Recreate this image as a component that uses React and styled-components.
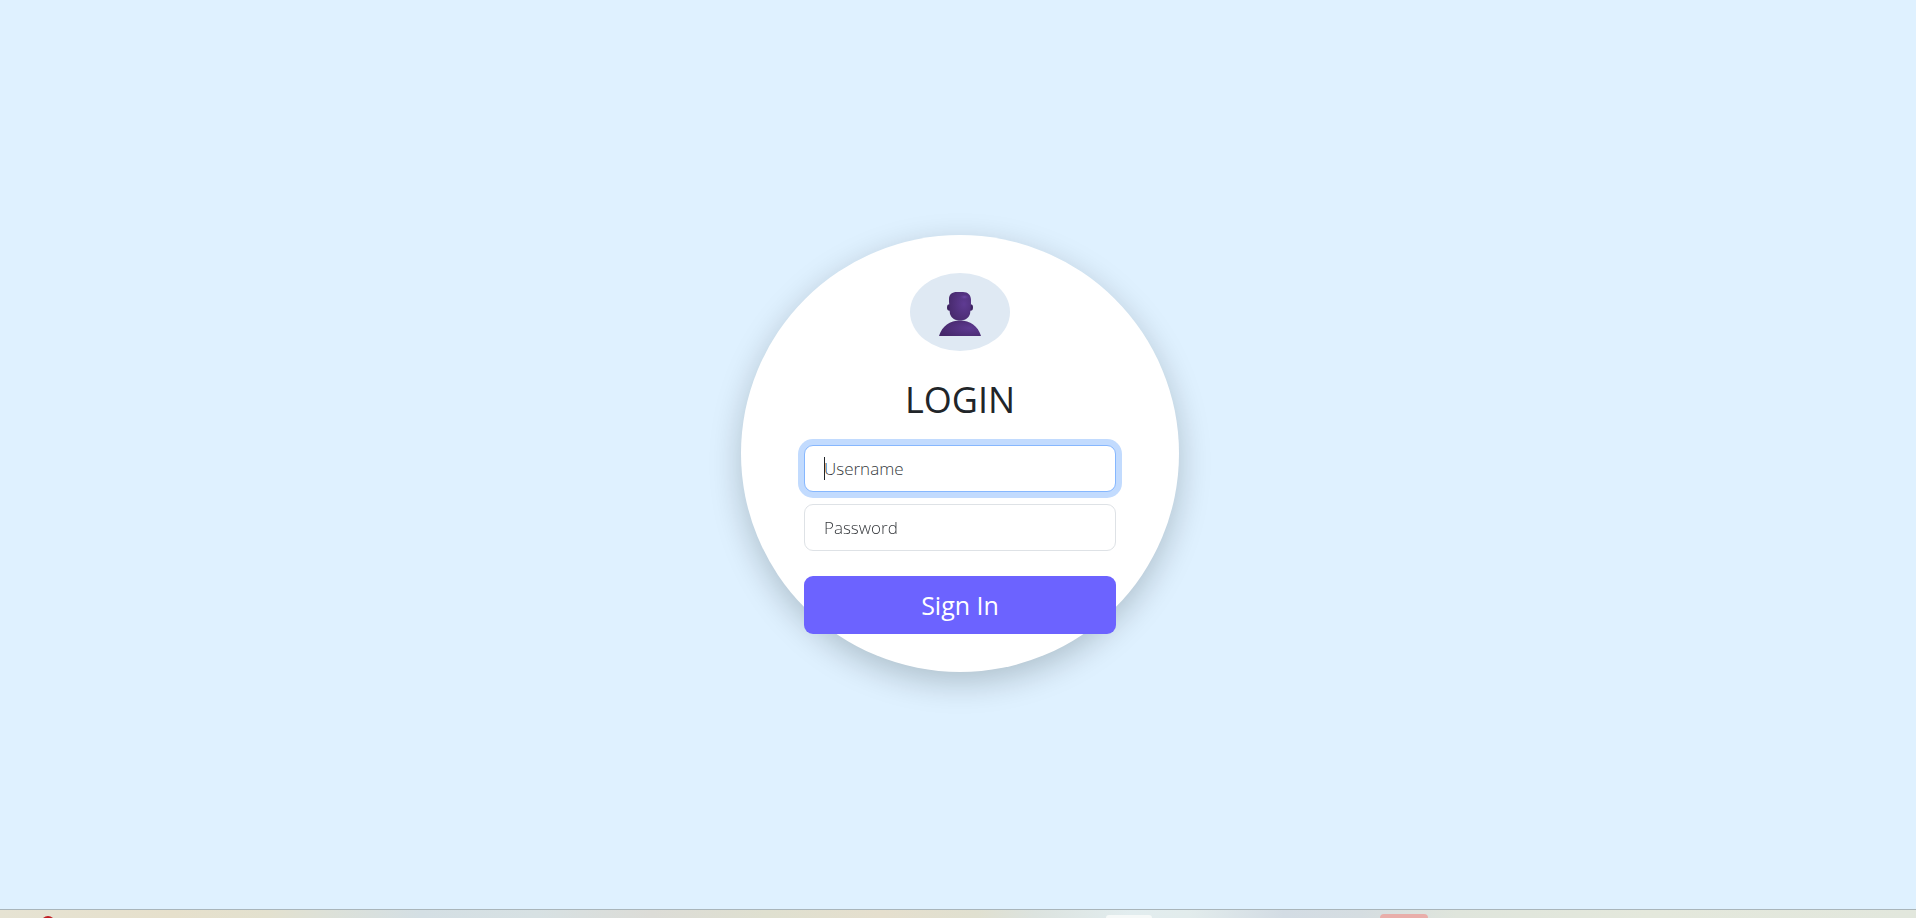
import React from "react";
import styled, { createGlobalStyle } from "styled-components";

const GlobalStyle = createGlobalStyle`
  *, *::before, *::after { box-sizing: border-box; }
  body {
    margin: 0;
    background: #dff1ff;
    color: #212529;
    font-family: "Segoe UI", "Open Sans", "Noto Sans", sans-serif;
  }
`;

const Page = styled.div`
  display: flex;
  flex-direction: column;
  min-height: 100vh;
`;

const Main = styled.main`
  flex: 1;
  display: flex;
  align-items: center;
  justify-content: center;
  padding: 0 0 2px 4px;
`;

const LoginForm = styled.form`
  display: flex;
  flex-direction: column;
  align-items: center;
  width: 438px;
  padding: 38px 63px;
  border-radius: 50%;
  background: #fff;
  box-shadow: 0 10px 32px rgba(0, 20, 20, 0.22);
`;

const Avatar = styled.svg`
  display: block;
  width: 100px;
  height: 78px;
`;

const Title = styled.h1`
  margin: 24px 0 20px;
  font-size: 36px;
  font-weight: 400;
  line-height: 50px;
`;

const Field = styled.div`
  position: relative;
  width: 100%;
  margin-bottom: ${(p) => (p.$last ? 25 : 12)}px;
`;

const Input = styled.input`
  display: block;
  width: 100%;
  height: 47px;
  padding: 0 19px;
  border: 1px solid #dee2e6;
  border-radius: 9px;
  background: #fff;
  color: #212529;
  font: 300 17px/24px "Segoe UI", "Open Sans", "Noto Sans", sans-serif;

  &::placeholder { color: #36393d; opacity: 1; }

  &:focus {
    outline: 0;
    border-color: #86b7fe;
    box-shadow: 0 0 0 6px #c2dbfe;
  }
`;

const Caret = styled.span`
  position: absolute;
  left: 20px;
  top: 12px;
  width: 1px;
  height: 23px;
  background: #212529;
`;

const SubmitButton = styled.button`
  width: 100%;
  height: 58px;
  border: 0;
  border-radius: 9px;
  background: #6c63ff;
  color: #fff;
  font: 400 25px/36px "Segoe UI", "Open Sans", "Noto Sans", sans-serif;
  cursor: pointer;
`;

const Taskbar = styled.footer`
  display: flex;
  height: 9px;
  overflow: hidden;
  border-top: 1px solid #a9b5ba;
  background: linear-gradient(
    90deg,
    #e6e3d3 0%, #e6e0cc 9%, #e3e1cf 14%, #dde1d8 17%, #d4dfe4 22%, #d7e1e3 28%,
    #dcdcd7 34%, #dfe0d0 40%, #e5dfce 46%, #e0e0d0 51%, #dce3df 54%, #e2edef 59%,
    #e2ecec 62%, #d3dce4 67%, #d5dde1 71%, #dfe5dc 76%, #e4e8dc 86%, #e2e7dd 100%
  );
`;

const TaskbarSlot = styled.div`
  display: flex;
  flex: ${(p) => p.$share} 0 0;
  align-items: flex-end;
`;

const TaskbarTile = styled.span`
  width: ${(p) => p.$width}px;
  height: ${(p) => p.$height}px;
  border-radius: 4px 4px 0 0;
  background: ${(p) => p.$color};
`;

const TaskbarIcon = styled.svg`
  display: block;
  width: 10px;
  height: 2px;
  margin-left: 43px;
`;

function UserAvatar() {
  return (
    <Avatar viewBox="0 0 100 78" role="img" aria-label="User">
      <defs>
        <radialGradient id="face" cx="0.68" cy="0.42" r="0.75">
          <stop offset="0" stopColor="#5f3b93" />
          <stop offset="1" stopColor="#46296b" />
        </radialGradient>
        <radialGradient id="body" cx="0.72" cy="0.5" r="0.75">
          <stop offset="0" stopColor="#5e3a91" />
          <stop offset="1" stopColor="#452769" />
        </radialGradient>
        <radialGradient id="shine">
          <stop offset="0" stopColor="#6e48a4" />
          <stop offset="1" stopColor="#5f3b93" stopOpacity="0" />
        </radialGradient>
      </defs>
      <ellipse cx="50" cy="39" rx="50" ry="39" fill="#dfe9f3" />
      <ellipse cx="39.5" cy="34.5" rx="2.5" ry="3.3" fill="#3d2260" />
      <ellipse cx="60.5" cy="34.5" rx="2.5" ry="3.3" fill="#3d2260" />
      <path
        d="M39 29V26C39 21.5 42 19 47 19H53C58 19 61 22 61 27V31C60.4 35 60.6 38 60 41C58.5 45.5 54.5 47.5 50 47.5C45.5 47.5 41.5 45.5 40 41C39.4 38 39.6 34 39 29Z"
        fill="url(#face)"
      />
      <ellipse cx="54.5" cy="24" rx="5" ry="2.5" fill="url(#shine)" />
      <path d="M29 63C32 53 40 47.5 50 47.5C60 47.5 68 53 71 63Z" fill="url(#body)" />
    </Avatar>
  );
}

export default function App() {
  return (
    <Page>
      <GlobalStyle />
      <Main>
        <LoginForm onSubmit={(e) => e.preventDefault()}>
          <UserAvatar />
          <Title>LOGIN</Title>
          <Field>
            <Input type="text" name="username" placeholder="Username" aria-label="Username" autoFocus />
            <Caret aria-hidden="true" />
          </Field>
          <Field $last>
            <Input type="password" name="password" placeholder="Password" aria-label="Password" />
          </Field>
          <SubmitButton type="submit">Sign In</SubmitButton>
        </LoginForm>
      </Main>
      <Taskbar>
        <TaskbarSlot $share={1106}>
          <TaskbarIcon viewBox="0 0 10 2">
            <path d="M0 2Q5 -2 10 2Z" fill="#c01d22" />
          </TaskbarIcon>
        </TaskbarSlot>
        <TaskbarSlot $share={274}>
          <TaskbarTile $width={46} $height={3} $color="#f6f9f8" />
        </TaskbarSlot>
        <TaskbarSlot $share={536}>
          <TaskbarTile $width={48} $height={4} $color="#e9aeaa" />
        </TaskbarSlot>
      </Taskbar>
    </Page>
  );
}
